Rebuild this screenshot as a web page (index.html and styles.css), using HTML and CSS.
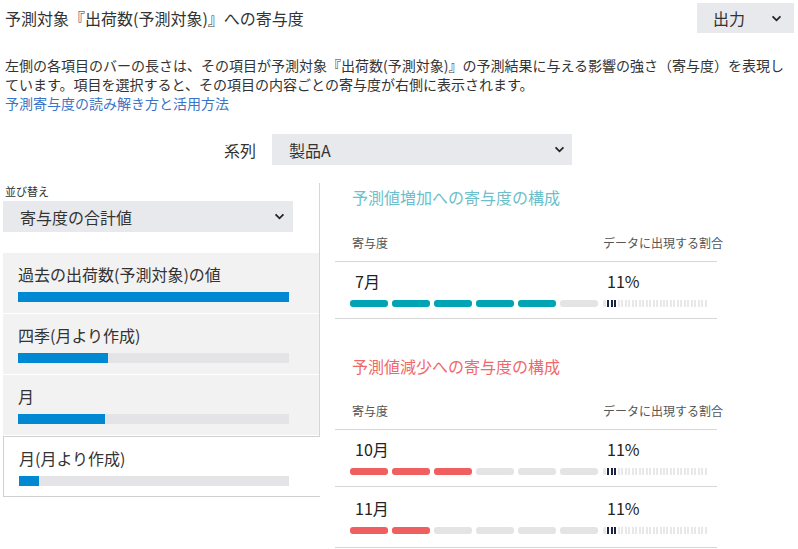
FILE: index.html
```html
<!DOCTYPE html>
<html lang="ja">
<head>
<meta charset="utf-8">
<title>寄与度</title>
<link rel="stylesheet" href="styles.css">
</head>
<body>
<header class="top">
  <h1 class="title">予測対象『出荷数(予測対象)』への寄与度</h1>
  <button class="dropdown dropdown--out" type="button"><span>出力</span><svg class="chev" viewBox="0 0 12 8" width="11" height="7"><polyline points="1.5,1.5 6,6 10.5,1.5"/></svg></button>
</header>
<p class="desc">左側の各項目のバーの長さは、その項目が予測対象『出荷数(予測対象)』の予測結果に与える影響の強さ（寄与度）を表現し<br>ています。項目を選択すると、その項目の内容ごとの寄与度が右側に表示されます。</p>
<a class="link" href="#">予測寄与度の読み解き方と活用方法</a>

<div class="series">
  <span class="series-label">系列</span>
  <div class="dropdown dropdown--series"><span>製品A</span><svg class="chev" viewBox="0 0 12 8" width="11" height="7"><polyline points="1.5,1.5 6,6 10.5,1.5"/></svg></div>
</div>

<div class="main">
  <aside class="left">
    <div class="sort-label">並び替え</div>
    <div class="dropdown dropdown--sort"><span>寄与度の合計値</span><svg class="chev" viewBox="0 0 12 8" width="11" height="7"><polyline points="1.5,1.5 6,6 10.5,1.5"/></svg></div>
    <ul class="items">
      <li class="item"><div class="item-name">過去の出荷数(予測対象)の値</div><div class="track"><div class="fill" style="width:100%"></div></div></li>
      <li class="item"><div class="item-name">四季(月より作成)</div><div class="track"><div class="fill" style="width:33.2%"></div></div></li>
      <li class="item"><div class="item-name">月</div><div class="track"><div class="fill" style="width:32.1%"></div></div></li>
      <li class="item item--selected"><div class="item-name">月(月より作成)</div><div class="track"><div class="fill" style="width:7.4%"></div></div></li>
    </ul>
  </aside>

  <section class="right">
    <div class="block">
      <h2 class="block-title block-title--up">予測値増加への寄与度の構成</h2>
      <div class="grid head"><span class="head-l">寄与度</span><span class="head-r">データに出現する割合</span></div>
      <div class="grid row">
        <div class="row-name">7月</div>
        <div class="row-pct">11%</div>
        <div class="segs segs--up"><i class="on"></i><i class="on"></i><i class="on"></i><i class="on"></i><i class="on"></i><i></i></div>
        <div class="ticks"><i></i><i class="on"></i><i class="on"></i><i class="on"></i><i></i><i></i><i></i><i></i><i></i><i></i><i></i><i></i><i></i><i></i><i></i><i></i><i></i><i></i><i></i><i></i><i></i><i></i><i></i><i></i><i></i><i></i><i></i><i></i><i></i><i></i></div>
      </div>
    </div>

    <div class="block block--down">
      <h2 class="block-title block-title--down">予測値減少への寄与度の構成</h2>
      <div class="grid head"><span class="head-l">寄与度</span><span class="head-r">データに出現する割合</span></div>
      <div class="grid row">
        <div class="row-name">10月</div>
        <div class="row-pct">11%</div>
        <div class="segs segs--down"><i class="on"></i><i class="on"></i><i class="on"></i><i></i><i></i><i></i></div>
        <div class="ticks"><i></i><i class="on"></i><i class="on"></i><i class="on"></i><i></i><i></i><i></i><i></i><i></i><i></i><i></i><i></i><i></i><i></i><i></i><i></i><i></i><i></i><i></i><i></i><i></i><i></i><i></i><i></i><i></i><i></i><i></i><i></i><i></i><i></i></div>
      </div>
      <div class="grid row row--last">
        <div class="row-name">11月</div>
        <div class="row-pct">11%</div>
        <div class="segs segs--down"><i class="on"></i><i class="on"></i><i></i><i></i><i></i><i></i></div>
        <div class="ticks"><i></i><i class="on"></i><i class="on"></i><i class="on"></i><i></i><i></i><i></i><i></i><i></i><i></i><i></i><i></i><i></i><i></i><i></i><i></i><i></i><i></i><i></i><i></i><i></i><i></i><i></i><i></i><i></i><i></i><i></i><i></i><i></i><i></i></div>
      </div>
    </div>
  </section>
</div>
</body>
</html>
```

FILE: styles.css
```css
* { box-sizing: border-box; }
html, body { margin: 0; padding: 0; background: #fff; }
body {
  width: 798px;
  height: 549px;
  overflow: hidden;
  padding: 0 4px 0 3px;
  font-family: "Noto Sans CJK JP", "Noto Sans", sans-serif;
  color: #333;
}

.top {
  display: flex;
  justify-content: space-between;
  align-items: center;
  margin-top: 3px;
  height: 30px;
}
.title {
  margin: 0;
  padding-left: 2px;
  font-size: 16px;
  font-weight: normal;
  line-height: 30px;
}

.dropdown {
  display: flex;
  align-items: center;
  justify-content: space-between;
  background: #e8e9ec;
  border: 0;
  color: #333;
  font-family: inherit;
  font-size: 16px;
  height: 31px;
}
.chev { display: block; }
.chev polyline { fill: none; stroke: #222; stroke-width: 2; }

.dropdown--out {
  width: 97px;
  height: 30px;
  padding: 0 12px 0 16px;
}
.dropdown--series {
  width: 300px;
  padding: 0 7px 0 17px;
}
.dropdown--sort {
  width: 290px;
  margin-top: 1px;
  padding: 0 8px 0 17px;
}

.desc {
  margin: 23px 0 0;
  padding-left: 2px;
  font-size: 14px;
  line-height: 19px;
}
.link {
  display: block;
  padding-left: 2px;
  font-size: 14px;
  line-height: 19px;
  color: #3a74c8;
  text-decoration: none;
}

.series {
  display: flex;
  justify-content: center;
  align-items: center;
  gap: 16px;
  margin-top: 21px;
  padding-right: 1px;
}
.series-label { font-size: 16px; }

.main {
  display: flex;
  align-items: flex-start;
  margin-top: 18px;
}

.left {
  width: 317px;
  border-right: 1px solid #d6d6d6;
}
.sort-label {
  padding-left: 2px;
  font-size: 11px;
  line-height: 17px;
}
.items {
  list-style: none;
  margin: 21px 0 0;
  padding: 0;
}
.item {
  background: #f2f2f2;
  padding: 9px 30px 11px 15px;
  margin-bottom: 1px;
}
.item-name {
  font-size: 16px;
  line-height: 24px;
}
.track {
  margin-top: 6px;
  height: 10px;
  background: #e4e4e6;
}
.fill {
  height: 100%;
  background: #0088d2;
}
.item--selected {
  position: relative;
  margin: 0 -1px 0 0;
  background: #fff;
  border: 1px solid #d0d0d0;
  border-right: 0;
  padding: 9px 31px 10px 15px;
}

.right {
  width: 382px;
  margin-left: 15px;
  padding-top: 2px;
}
.block--down { margin-top: 35px; }
.block-title {
  margin: 0;
  padding-left: 17px;
  font-size: 16px;
  font-weight: normal;
  line-height: 24px;
}
.block-title--up { color: #6cbfcb; }
.block-title--down { color: #f0696a; }

.grid {
  display: grid;
  grid-template-columns: 248px 104px;
  column-gap: 5px;
  padding-left: 15px;
  border-bottom: 1px solid #d6d6d6;
}
.head {
  margin-top: 25px;
  padding-bottom: 9px;
  font-size: 12px;
  line-height: 18px;
  color: #555;
}
.block--down .head { margin-top: 24px; }
.head-l { padding-left: 2px; }
.head-r { white-space: nowrap; }

.row { padding-top: 7px; padding-bottom: 11px; }
.row--last { padding-top: 9px; padding-bottom: 13px; }
.row-name, .row-pct {
  font-size: 16px;
  line-height: 24px;
  color: #222;
}
.row-name { padding-left: 5px; }
.row-pct { padding-left: 4px; }

.segs {
  display: flex;
  gap: 4px;
  margin-top: 7px;
}
.segs i {
  display: block;
  width: 38px;
  height: 7px;
  border-radius: 3px;
  background: #e4e4e4;
}
.segs--up i.on { background: #00a4b4; }
.segs--down i.on { background: #ef5f5f; }

.ticks {
  display: flex;
  justify-content: space-between;
  margin-top: 7px;
  height: 7px;
}
.ticks i {
  display: block;
  width: 2px;
  height: 7px;
  background: #e8e8e8;
}
.ticks i:first-child {
  width: 3px;
  border-radius: 2px 0 0 2px;
}
.ticks i.on { background: #1b2342; }
```
